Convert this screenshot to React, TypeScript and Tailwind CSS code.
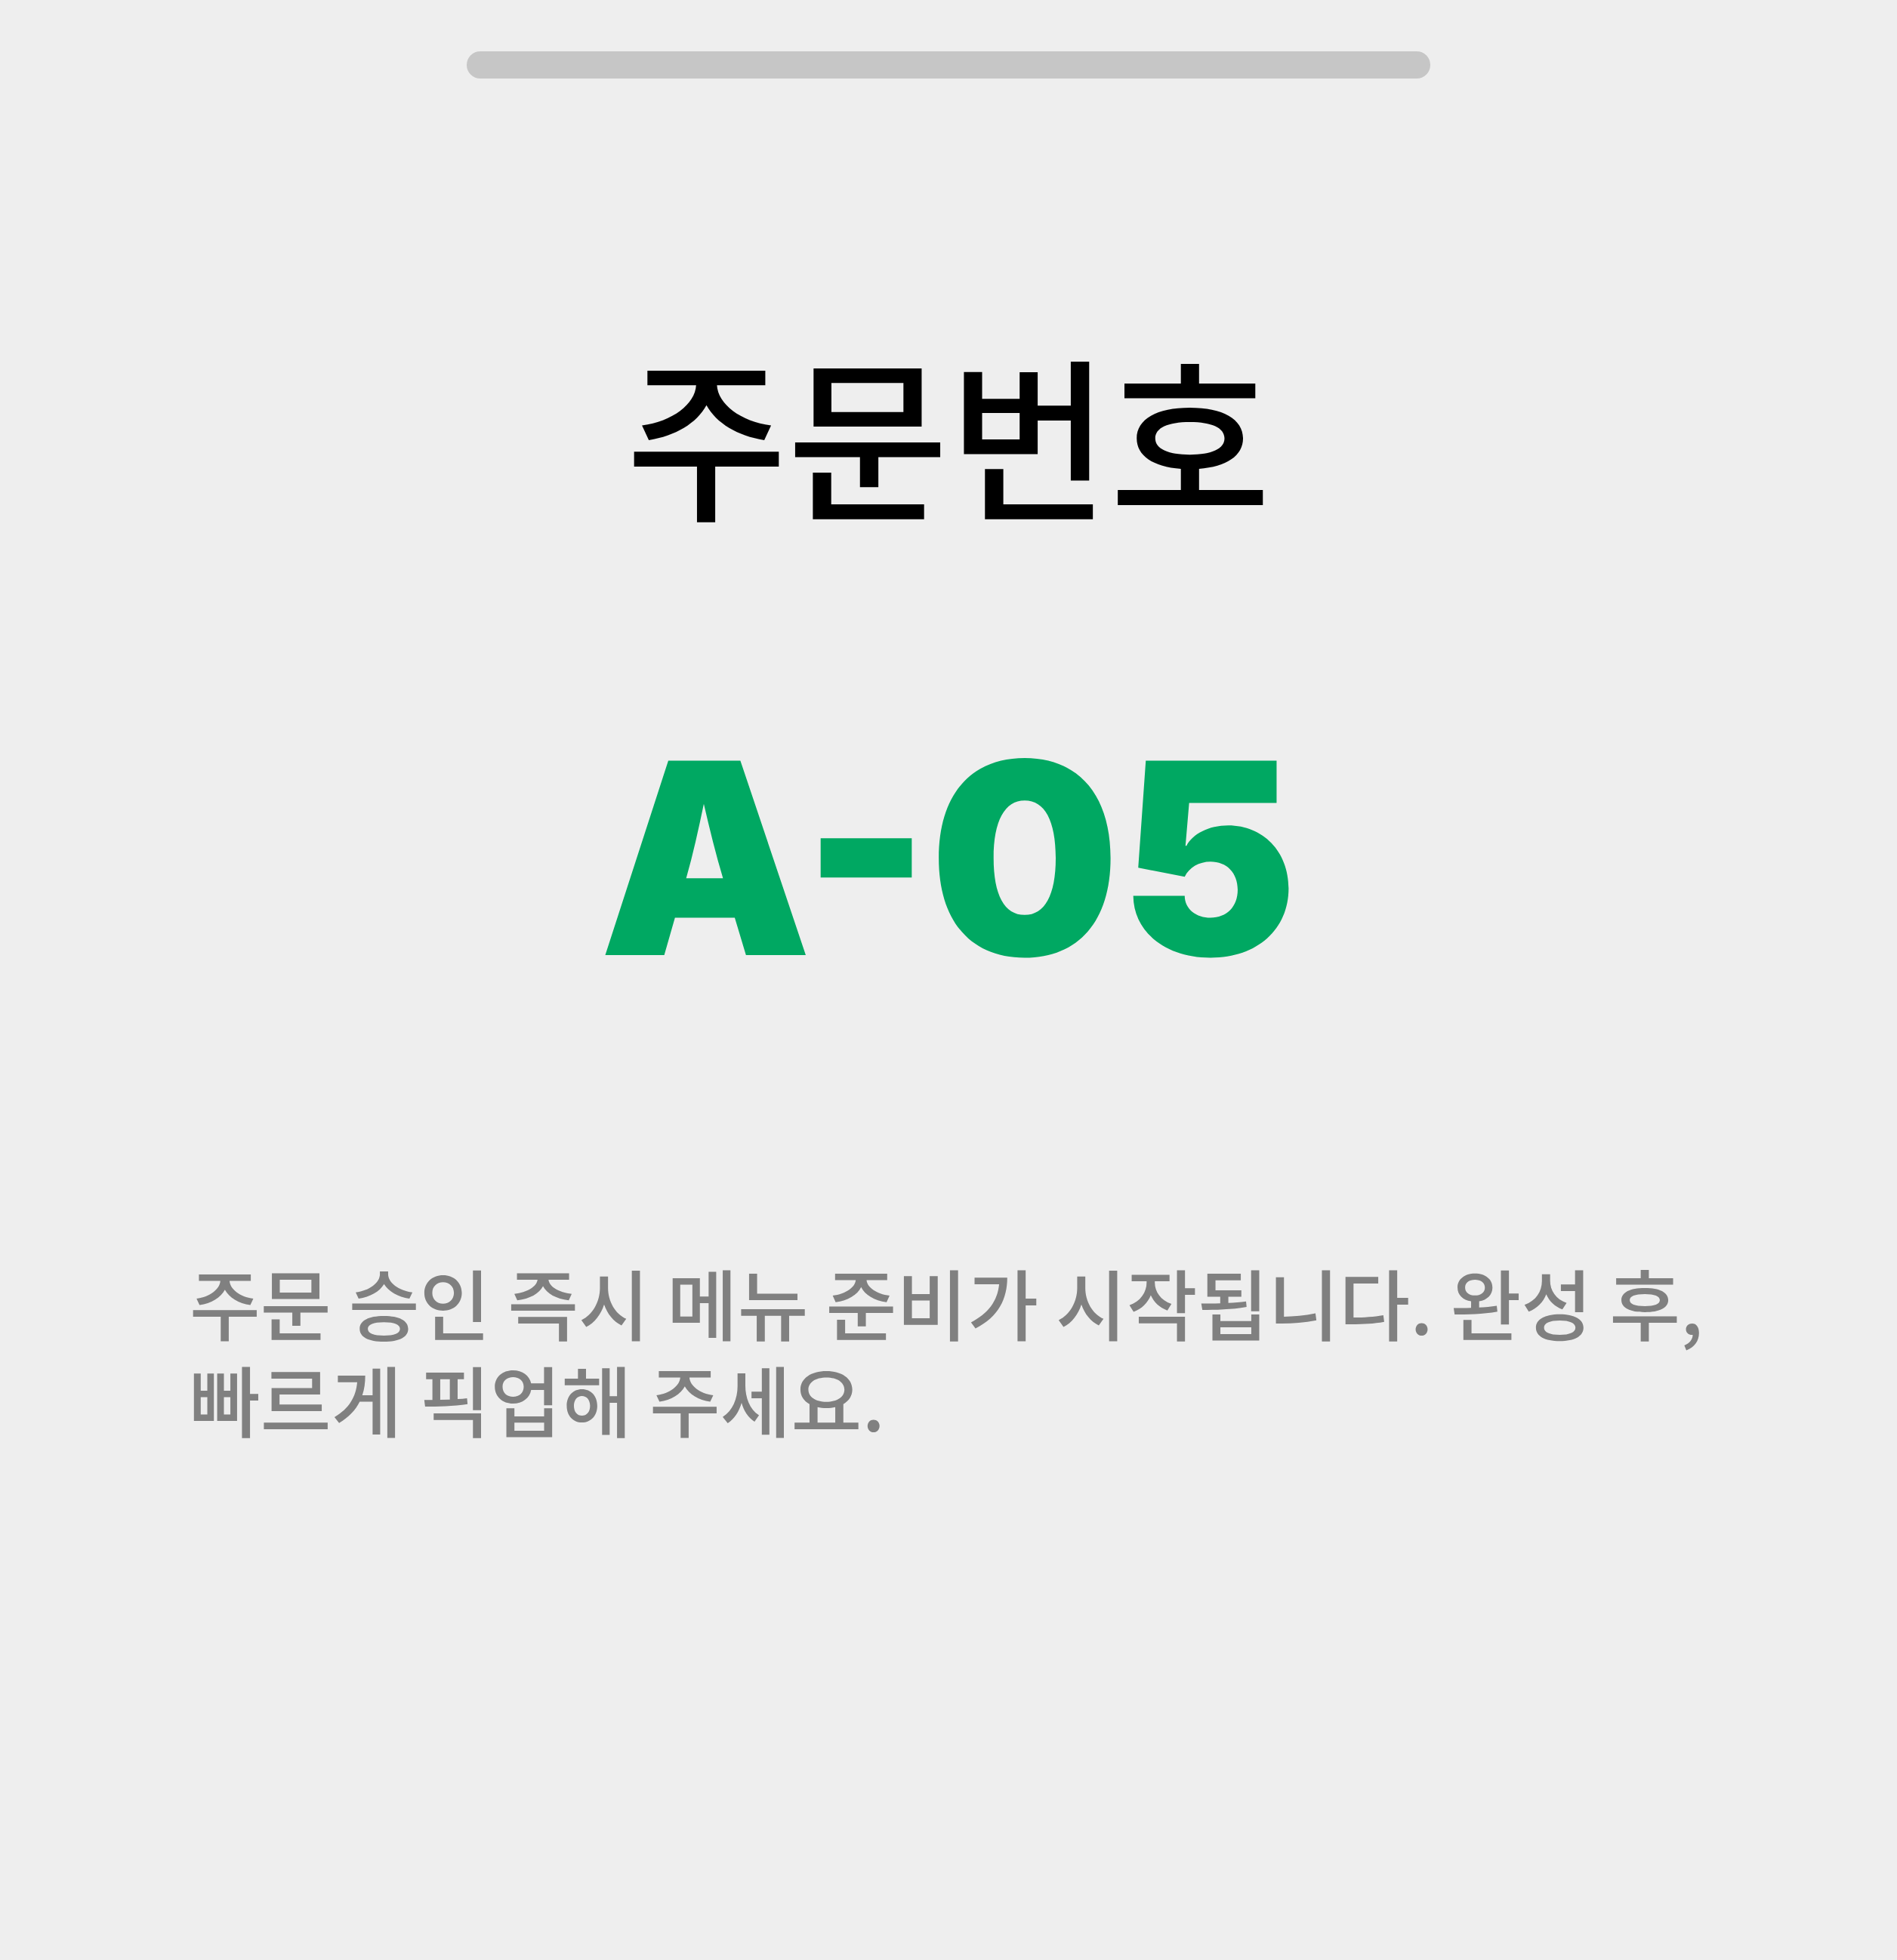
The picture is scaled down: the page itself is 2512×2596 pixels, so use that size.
import React from "react";

export default function App() {
  return (
    <div className="min-h-[2596px] w-full bg-[#eeeeee] flex flex-col items-center">
      <div className="mt-[68px] h-[36px] w-[1276px] rounded-full bg-[#c6c6c6]" />
      <h1 className="mt-[351px] text-[232px] leading-none font-medium text-black font-['Noto_Sans_CJK_KR','Noto_Sans',sans-serif]">
        주문번호
      </h1>
      <div className="mt-[272px] text-[354px] leading-none font-black text-[#00a862] [font-feature-settings:'case'] font-['Inter','Liberation_Sans',sans-serif]">
        A-05
      </div>
      <p className="mt-[347px] w-full px-[251px] text-[102px] leading-[128px] font-medium text-[#808080] font-['Noto_Sans_CJK_KR','Noto_Sans',sans-serif]">
        주문 승인 즉시 메뉴 준비가 시작됩니다. 완성 후,
        <br />
        빠르게 픽업해 주세요.
      </p>
    </div>
  );
}
